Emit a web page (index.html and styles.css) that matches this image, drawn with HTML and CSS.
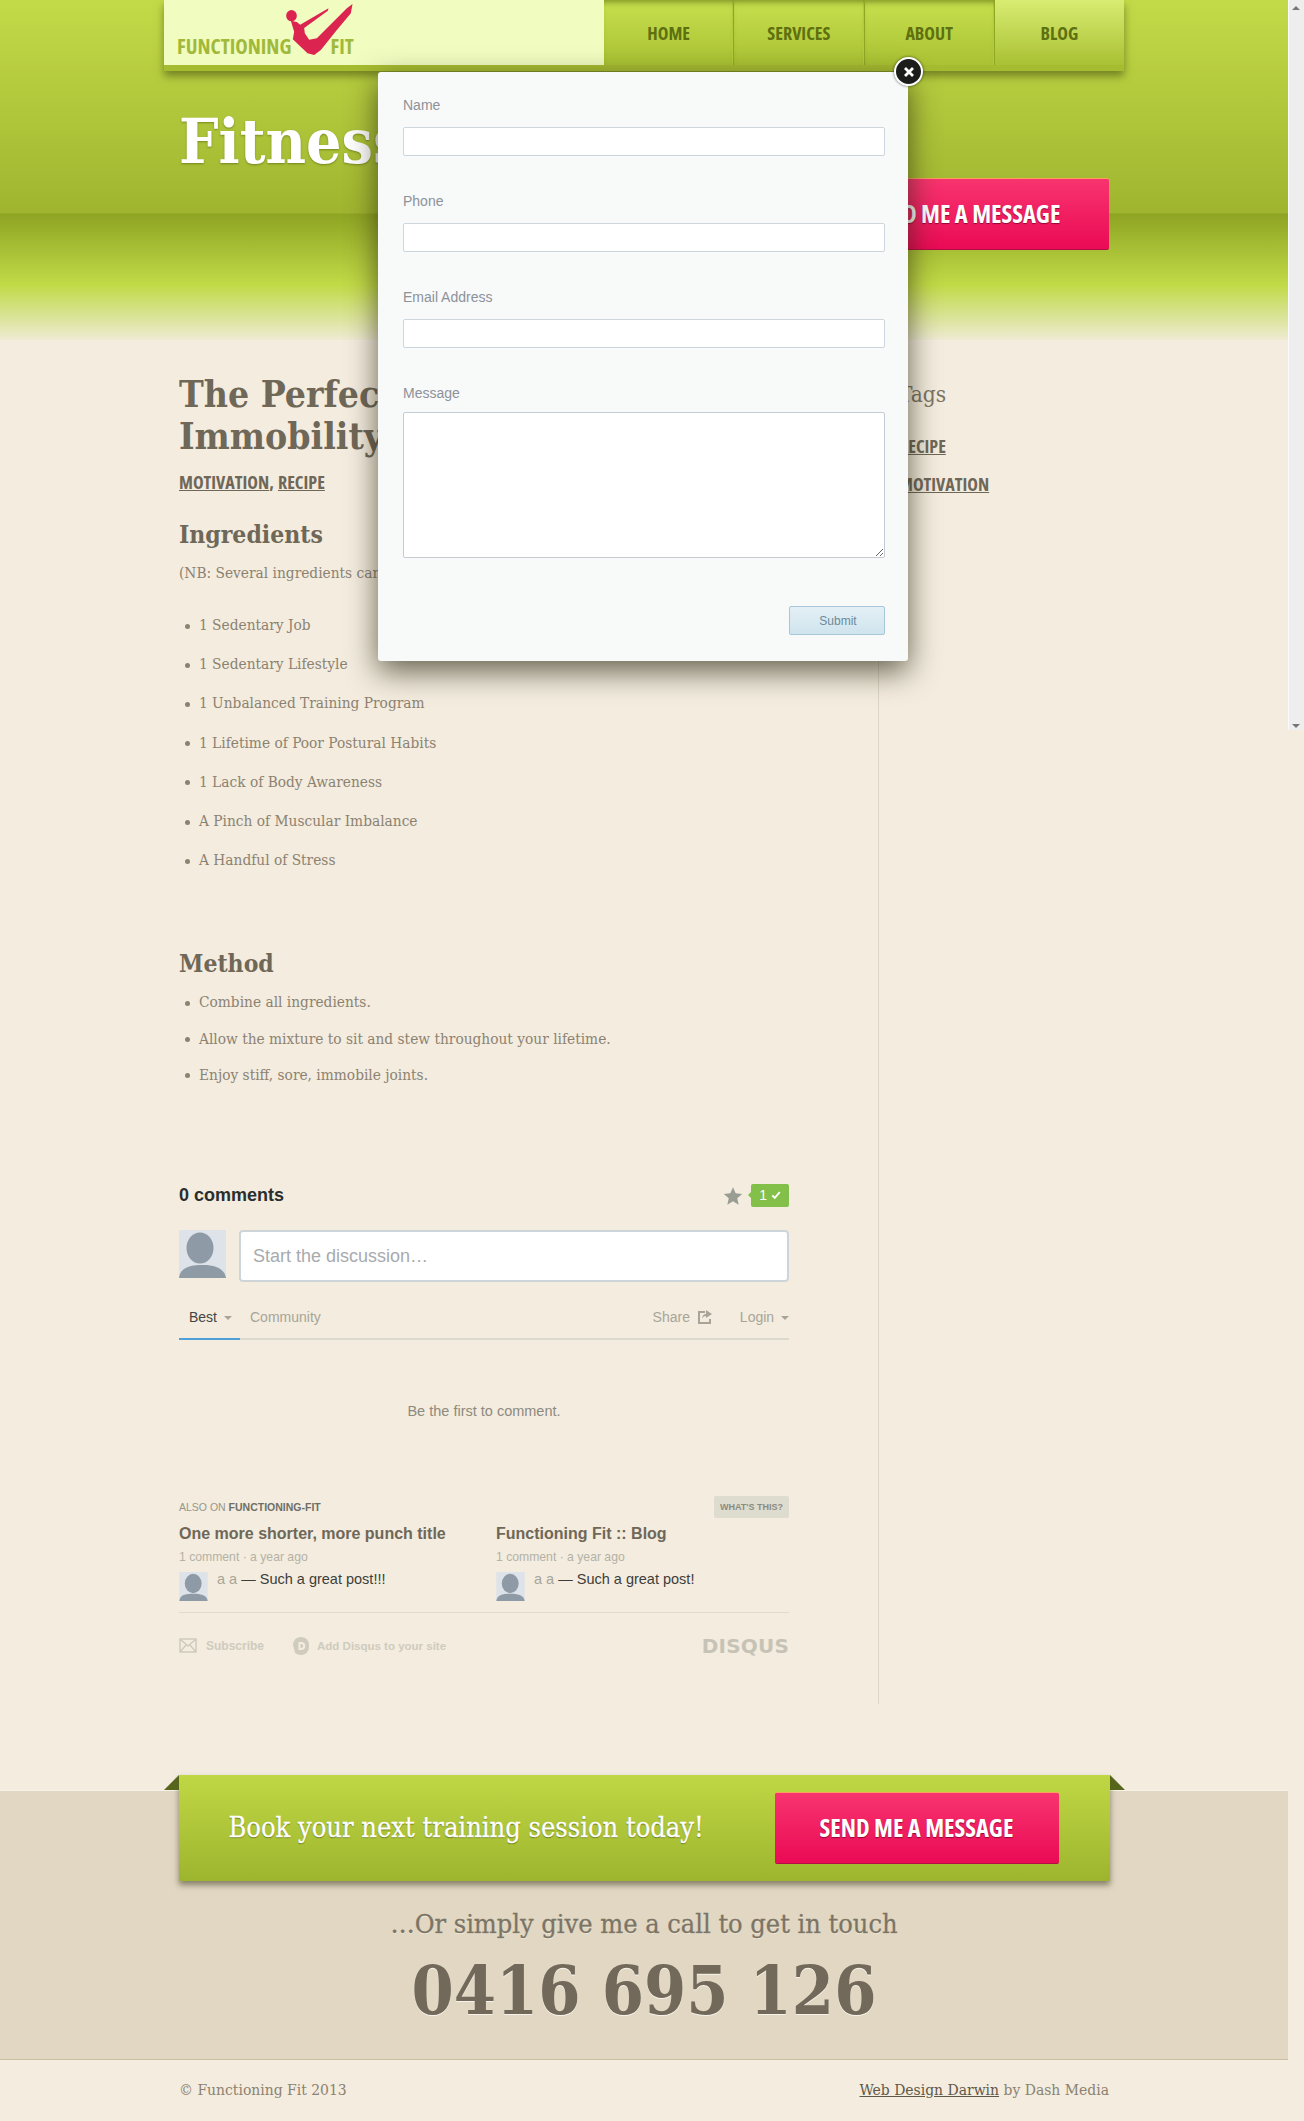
FILE: index.html
```html
<!DOCTYPE html>
<html>
  <head>
    <meta charset="utf-8">
    <title>The Perfect Recipe for Immobility - Functioning Fit</title>
    <link rel="stylesheet" href="styles.css">
  </head>
  <body>
    <div class="page">
      <header class="hero">
        <nav class="topbar">
          <a class="logo" href="#">
            <span class="logo-word">FUNCTIONING</span>
            <span class="logo-word fit">FIT</span>
            <svg class="logo-figure" viewBox="378 0 200 168" width="67" height="56">
              <ellipse cx="394" cy="47" rx="16" ry="17" fill="#dc2450"/>
              <path fill="#dc2450" d="M392 62 L410 66 L420 74 L505 25 L503 32 L432 84 L434 100 L447 119 L470 115 L530 55 L560 25 L577 12 L572 40 L530 90 L482 150 L462 165 L442 160 L398 118 L402 95 Z"/>
            </svg>
          </a>
          <ul class="menu">
            <li><a href="#">HOME</a></li>
            <li><a href="#">SERVICES</a></li>
            <li><a href="#">ABOUT</a></li>
            <li class="current"><a href="#">BLOG</a></li>
          </ul>
        </nav>
        <div class="hero-row">
          <h1>Fitness Blog</h1>
          <a class="pink-btn" href="#">SEND ME A MESSAGE</a>
        </div>
      </header>

      <div class="main">
        <article class="content">
          <h2>The Perfect Recipe for<br>Immobility</h2>
          <p class="post-tags"><a href="#">MOTIVATION</a>, <a href="#">RECIPE</a></p>

          <h3>Ingredients</h3>
          <p class="note">(NB: Several ingredients can be substituted)</p>
          <ul class="ingredients">
            <li>1 Sedentary Job</li>
            <li>1 Sedentary Lifestyle</li>
            <li>1 Unbalanced Training Program</li>
            <li>1 Lifetime of Poor Postural Habits</li>
            <li>1 Lack of Body Awareness</li>
            <li>A Pinch of Muscular Imbalance</li>
            <li>A Handful of Stress</li>
          </ul>

          <h3 class="method-title">Method</h3>
          <ul class="method">
            <li>Combine all ingredients.</li>
            <li>Allow the mixture to sit and stew throughout your lifetime.</li>
            <li>Enjoy stiff, sore, immobile joints.</li>
          </ul>

          <!-- comments -->
          <section class="disqus">
            <div class="dq-head">
              <strong>0 comments</strong>
              <div class="dq-rec">
                <svg viewBox="0 0 24 24" width="20" height="20"><path fill="#9a9d93" d="M12 1.500l3.200 7.200 7.800.8-5.900 5.200 1.700 7.700L12 18.400l-6.800 4 1.700-7.700L1 9.500l7.800-.8z"/></svg>
                <span class="dq-badge">1 <svg viewBox="0 0 12 12" width="10" height="10"><path fill="none" stroke="#fff" stroke-width="2.200" d="M1.500 6.500l3 3 6-7"/></svg></span>
              </div>
            </div>
            <div class="dq-compose">
              <svg class="avatar" viewBox="0 0 47 48" width="47" height="48">
                <rect width="47" height="48" fill="#dde3e8"/>
                <ellipse cx="21" cy="18" rx="13.500" ry="15.500" fill="#8e9aa6"/>
                <path fill="#8e9aa6" d="M0 48 C1 38 10 35 24 35 C38 35 46 40 47 48 Z"/>
              </svg>
              <div class="dq-input">Start the discussion…</div>
            </div>
            <div class="dq-tabs">
              <a class="active" href="#">Best <i class="caret"></i></a>
              <a href="#">Community</a>
              <span class="spacer"></span>
              <a class="share" href="#">Share
                <svg viewBox="0 0 14 14" width="14" height="14"><path fill="#a8a598" d="M0 1h7v2H2v9h9V9h2v5H0z"/><path fill="#a8a598" d="M8 0l6 4-6 4V6C6 6 4.500 7 4 9c0-3 1.500-5 4-5z"/></svg>
              </a>
              <a class="login" href="#">Login <i class="caret"></i></a>
            </div>
            <p class="dq-empty">Be the first to comment.</p>

            <div class="dq-also">
              <span>ALSO ON <b>FUNCTIONING-FIT</b></span>
              <a class="whats" href="#">WHAT'S THIS?</a>
            </div>
            <div class="dq-related">
              <div class="dq-item">
                <h4>One more shorter, more punch title</h4>
                <p class="dq-meta">1 comment · a year ago</p>
                <div class="dq-quote">
                  <svg class="avatar" viewBox="0 0 47 48" width="29" height="29">
                    <rect width="47" height="48" fill="#dde3e8"/>
                    <ellipse cx="23" cy="19" rx="14" ry="16" fill="#8e9aa6"/>
                    <path fill="#8e9aa6" d="M0 48 C1 38 10 36 24 36 C38 36 46 40 47 48 Z"/>
                  </svg>
                  <p><span>a a</span> — Such a great post!!!</p>
                </div>
              </div>
              <div class="dq-item">
                <h4>Functioning Fit :: Blog</h4>
                <p class="dq-meta">1 comment · a year ago</p>
                <div class="dq-quote">
                  <svg class="avatar" viewBox="0 0 47 48" width="29" height="29">
                    <rect width="47" height="48" fill="#dde3e8"/>
                    <ellipse cx="23" cy="19" rx="14" ry="16" fill="#8e9aa6"/>
                    <path fill="#8e9aa6" d="M0 48 C1 38 10 36 24 36 C38 36 46 40 47 48 Z"/>
                  </svg>
                  <p><span>a a</span> — Such a great post!</p>
                </div>
              </div>
            </div>
            <div class="dq-foot">
              <a href="#">
                <svg viewBox="0 0 18 15" width="18" height="15"><path fill="none" stroke="#cfcbbd" stroke-width="1.500" d="M1 1h16v13H1zM1 1l8 7 8-7M1 14l6-7M17 14l-6-7"/></svg>
                Subscribe
              </a>
              <a class="add" href="#">
                <svg viewBox="0 0 16 18" width="16" height="18"><path fill="#cfcbbd" d="M8 0a8 8 0 0 1 8 8v2a8 8 0 0 1-8 8c-3 0-5-1-6-2.500L0 8a8 8 0 0 1 8-8z"/><path fill="#f3ecdf" d="M5.500 5h2.700a4 4 0 0 1 0 8H5.500zM7.500 7v4h.7a2 2 0 0 0 0-4z"/></svg>
                Add Disqus to your site
              </a>
              <span class="spacer"></span>
              <span class="dq-logo">DISQUS</span>
            </div>
          </section>
        </article>

        <aside class="sidebar">
          <h3>Tags</h3>
          <ul>
            <li><a href="#">RECIPE</a></li>
            <li><a href="#">MOTIVATION</a></li>
          </ul>
        </aside>
      </div>

      <section class="contact">
        <div class="ribbon">
          <p>Book your next training session today!</p>
          <a class="pink-btn" href="#">SEND ME A MESSAGE</a>
        </div>
        <p class="call">…Or simply give me a call to get in touch</p>
        <p class="phone">0416 695 126</p>
      </section>

      <footer class="bottom">
        <span>© Functioning Fit 2013</span>
        <span><a href="#">Web Design Darwin</a> by Dash Media</span>
      </footer>
    </div>

    <!-- contact popup -->
    <div class="modal">
      <a class="modal-close" href="#">
        <svg viewBox="0 0 12 12" width="12" height="12"><path stroke="#fff" stroke-width="2.800" d="M2 2l8 8M10 2l-8 8"/></svg>
      </a>
      <form>
        <label>Name</label>
        <input type="text">
        <label>Phone</label>
        <input type="text">
        <label>Email Address</label>
        <input type="text">
        <label>Message</label>
        <textarea></textarea>
        <div class="modal-actions"><button type="button">Submit</button></div>
      </form>
    </div>

    <!-- the window's scrollbar, caught in the photo -->
    <div class="scrollbar"><i class="up"></i><i class="down"></i></div>
  </body>
</html>
```

FILE: styles.css
```css
html, body {
  margin: 0;
  padding: 0;
}
body {
  position: relative;
  height: 2121px;
  overflow: hidden;
  background: #f3ecdf;
  color: #8c8271;
  font-family: "DejaVu Serif", serif;
  font-stretch: condensed;
}
a {
  color: inherit;
}
ul {
  margin: 0;
  padding: 0;
  list-style: none;
}
.page {
  width: 1288px;
}

/* header */
.hero {
  height: 340px;
  background: linear-gradient(to bottom,
    #c3da48 0, #9fb52f 213px,
    #8ea423 214px, #c1da47 285px,
    #dbe49a 318px, #f3ecdf 345px);
}
.topbar {
  display: flex;
  width: 960px;
  height: 71px;
  margin: 0 auto;
  background: #a6bc30;
  box-shadow: 0 5px 8px rgba(60, 70, 10, .55);
}
.logo {
  position: relative;
  display: flex;
  align-items: flex-end;
  width: 427px;
  height: 65px;
  padding-left: 13px;
  background: #f1fcc0;
  text-decoration: none;
}
.logo-word {
  margin-bottom: 8px;
  color: #a1b93a;
  font: bold 21px/1 "Open Sans", sans-serif;
  font-stretch: 75%;
}
.logo-word.fit {
  margin-left: 39px;
}
.logo-figure {
  position: absolute;
  left: 122px;
  top: 0;
}
.menu {
  display: flex;
  flex: 1;
  height: 65px;
}
.menu li {
  flex: 1;
  background: linear-gradient(to bottom, #c7e04e, #aac233);
  border-right: 1px solid #8fa624;
  box-shadow: inset 0 6px 6px -4px rgba(90, 105, 15, .7), inset -1px 0 0 #b9d240;
}
.menu li.current {
  border-right: 0;
  background: linear-gradient(to bottom, #d8ec72, #a9c133);
  box-shadow: none;
}
.menu a {
  display: block;
  padding-top: 22px;
  color: #5e7010;
  font: bold 18px/22px "Open Sans", sans-serif;
  font-stretch: 75%;
  text-align: center;
  text-decoration: none;
}
.hero-row {
  display: flex;
  justify-content: space-between;
  width: 930px;
  margin: 0 auto;
}
.hero-row h1 {
  margin: 31px 0 0;
  color: #fff;
  font: bold 62px/80px "DejaVu Serif", serif;
  font-stretch: condensed;
  text-shadow: 0 1px 2px rgba(70, 80, 10, .5);
}
.hero-row .pink-btn {
  margin-top: 107px;
  padding-right: 7px;
}
.pink-btn {
  display: block;
  box-sizing: border-box;
  width: 284px;
  height: 72px;
  border-top: 1px solid #f9a25e;
  border-bottom: 1px solid #b30d45;
  border-radius: 2px;
  background: linear-gradient(to bottom, #f8346f, #ea0a55);
  color: #fff;
  font: bold 24.500px/69px "Open Sans", sans-serif;
  font-stretch: 75%;
  text-align: center;
  text-decoration: none;
  text-shadow: 0 1px 1px #8c0a35;
}

/* post */
.main {
  display: flex;
  width: 930px;
  height: 1364px;
  margin: 0 auto;
}
.content {
  box-sizing: border-box;
  width: 700px;
  border-right: 1px solid #dcd5c5;
}
.content h2 {
  margin: 33px 0 0;
  color: #6f6757;
  font: bold 37px/42px "DejaVu Serif", serif;
  font-stretch: condensed;
}
.post-tags {
  margin: 13px 0 0;
  color: #6f6757;
  font: bold 18px/24px "Open Sans", sans-serif;
  font-stretch: 75%;
}
.post-tags a + a {
  margin-left: 1px;
}
.content h3 {
  margin: 23px 0 0;
  color: #6f6757;
  font: bold 24.500px/36px "DejaVu Serif", serif;
  font-stretch: condensed;
}
.note {
  margin: 8px 0 0;
  font-size: 15.300px;
  line-height: 24px;
}
.ingredients {
  margin-top: 21px;
}
.ingredients li, .method li {
  position: relative;
  padding-left: 20px;
  font-size: 15.300px;
}
.ingredients li {
  line-height: 39.200px;
}
.method li {
  line-height: 36.400px;
}
.ingredients li:before, .method li:before {
  content: "";
  position: absolute;
  left: 6px;
  top: 50%;
  width: 5px;
  height: 5px;
  margin-top: -2px;
  border-radius: 50%;
  background: #8c8271;
}
.content .method-title {
  margin-top: 66px;
}
.method {
  margin-top: 2px;
}

/* comments */
.disqus {
  width: 610px;
  margin-top: 90px;
  font-family: "Liberation Sans", sans-serif;
  font-stretch: normal;
}
.dq-head {
  display: flex;
  justify-content: space-between;
  align-items: center;
  height: 24px;
  color: #2a2e2e;
  font-size: 18px;
}
.dq-rec {
  display: flex;
  align-items: center;
  gap: 8px;
}
.dq-badge {
  position: relative;
  display: block;
  width: 38px;
  height: 23px;
  border-radius: 2px;
  background: #83c04a;
  color: #fff;
  font-size: 14px;
  line-height: 23px;
  text-align: center;
}
.dq-badge:before {
  content: "";
  position: absolute;
  left: -3px;
  top: 8px;
  border-top: 3px solid transparent;
  border-bottom: 3px solid transparent;
  border-right: 3px solid #83c04a;
}
.dq-compose {
  display: flex;
  gap: 13px;
  margin-top: 22px;
}
.avatar {
  display: block;
  flex: none;
}
.dq-input {
  flex: 1;
  box-sizing: border-box;
  height: 52px;
  padding-left: 12px;
  border: 2px solid #cdd5d9;
  border-radius: 4px;
  background: #fff;
  color: #a7abad;
  font-size: 18px;
  line-height: 48px;
}
.dq-tabs {
  display: flex;
  height: 43px;
  margin-top: 13px;
  border-bottom: 2px solid #dcd9cd;
  color: #a8a598;
  font-size: 14px;
  line-height: 44px;
}
.dq-tabs a {
  margin-bottom: -2px;
  text-decoration: none;
}
.dq-tabs a.active {
  box-sizing: border-box;
  width: 61px;
  padding-left: 10px;
  border-bottom: 2px solid #4f9fd8;
  color: #444;
}
.dq-tabs a:nth-child(2) {
  margin-left: 10px;
}
.dq-tabs .share svg {
  vertical-align: -2px;
  margin-left: 4px;
}
.dq-tabs .login {
  margin-left: 28px;
}
.spacer {
  flex: 1;
}
.caret {
  display: inline-block;
  margin-left: 3px;
  border-top: 4px solid #a8a598;
  border-left: 4px solid transparent;
  border-right: 4px solid transparent;
  vertical-align: 2px;
}
.dq-empty {
  margin: 61px 0 0;
  color: #8d8a7e;
  font-size: 14.500px;
  line-height: 20px;
  text-align: center;
}
.dq-also {
  display: flex;
  justify-content: space-between;
  align-items: center;
  height: 22px;
  margin-top: 75px;
  color: #96968c;
  font-size: 10.500px;
}
.dq-also b {
  color: #6f6f66;
}
.whats {
  display: block;
  width: 75px;
  border-radius: 2px;
  background: #dedbcf;
  color: #8c8c80;
  font-size: 9px;
  font-weight: bold;
  line-height: 22px;
  text-align: center;
  text-decoration: none;
}
.dq-related {
  display: flex;
  height: 94px;
  border-bottom: 1px solid #e0dbcd;
}
.dq-item {
  flex: none;
  width: 317px;
}
.dq-item + .dq-item {
  flex: 1;
  width: auto;
}
.dq-item h4 {
  margin: 5px 0 0;
  color: #6f6757;
  font-size: 16px;
  line-height: 22px;
}
.dq-meta {
  margin: 3px 0 0;
  color: #b4b2a6;
  font-size: 12.200px;
  line-height: 18px;
}
.dq-quote {
  display: flex;
  gap: 9px;
  margin-top: 6px;
}
.dq-quote p {
  margin: -2px 0 0;
  color: #3d3d3a;
  font-size: 14.500px;
  line-height: 18px;
}
.dq-quote span {
  color: #a8a598;
}
.dq-foot {
  display: flex;
  align-items: center;
  height: 30px;
  margin-top: 18px;
  color: #cfcbbd;
  font-size: 12px;
  font-weight: bold;
}
.dq-foot a {
  display: flex;
  align-items: center;
  gap: 9px;
  text-decoration: none;
}
.dq-foot .add {
  gap: 8px;
  margin-left: 29px;
  font-size: 11.500px;
}
.dq-logo {
  color: #c6c3b6;
  font: bold 20px/1 "DejaVu Sans", sans-serif;
  letter-spacing: .2px;
}

/* sidebar */
.sidebar {
  padding: 36px 0 0 20px;
}
.sidebar h3 {
  margin: 0;
  color: #7c7464;
  font: normal 22.500px/36px "DejaVu Serif", serif;
  font-stretch: condensed;
}
.sidebar ul {
  margin-top: 15px;
}
.sidebar li {
  color: #6f6757;
  font: bold 18px/38px "Open Sans", sans-serif;
  font-stretch: 75%;
}

/* call to action */
.contact {
  height: 268px;
  margin-top: 86px;
  border-top: 1px solid #f7f3ea;
  border-bottom: 1px solid #c9bfa3;
  background: #e1d7c2;
  text-align: center;
}
.ribbon {
  position: relative;
  display: flex;
  justify-content: space-between;
  box-sizing: border-box;
  width: 931px;
  height: 106px;
  margin: -16px auto 0;
  padding: 17px 51px 0 50px;
  background: linear-gradient(to bottom, #c0d744, #9db52e);
  box-shadow: 0 4px 6px rgba(60, 55, 30, .55);
}
.ribbon:before, .ribbon:after {
  content: "";
  position: absolute;
  top: 0;
  border-bottom: 15px solid #56651a;
}
.ribbon:before {
  left: -15px;
  border-left: 15px solid transparent;
}
.ribbon:after {
  right: -15px;
  border-right: 15px solid transparent;
}
.ribbon p {
  margin: 0;
  color: #fff;
  font: normal 27px/72px "DejaVu Serif", serif;
  font-stretch: condensed;
  text-shadow: 0 1px 1px rgba(70, 80, 10, .7);
  -webkit-text-stroke: .3px #fff;
}
.call {
  margin: 23px 0 0;
  color: #7c7464;
  font: normal 26.900px/40px "DejaVu Serif", serif;
  font-stretch: condensed;
  text-shadow: 0 1px 0 #f3ecdf;
  -webkit-text-stroke: .3px #7c7464;
}
.phone {
  margin: 3px 0 0;
  color: #72695a;
  font: bold 67.500px/88px "DejaVu Serif", serif;
  font-stretch: condensed;
  text-shadow: 0 1px 0 #f7f3ea;
}

/* footer */
.bottom {
  display: flex;
  justify-content: space-between;
  width: 930px;
  margin: 0 auto;
  padding-top: 19px;
  font-size: 15.500px;
  line-height: 22px;
}
.bottom a {
  color: #5f5849;
}

/* popup */
.modal {
  position: absolute;
  left: 378px;
  top: 72px;
  box-sizing: border-box;
  width: 530px;
  height: 589px;
  padding: 25px 23px 0 25px;
  border-radius: 3px;
  background: #f8f9f9;
  box-shadow: 0 10px 30px rgba(40, 35, 15, .7);
  font-family: "Liberation Sans", sans-serif;
  font-stretch: normal;
}
.modal label {
  display: block;
  color: #8d9299;
  font-size: 14px;
  line-height: 16px;
}
.modal input, .modal textarea {
  display: block;
  box-sizing: border-box;
  width: 482px;
  height: 29px;
  margin: 14px 0 37px;
  border: 1px solid #cdd6dc;
  border-radius: 2px;
  background: #fff;
  outline: 0;
}
.modal textarea {
  height: 146px;
  margin: 11px 0 0;
  border-color: #c3ccd2;
}
.modal-actions {
  display: flex;
  justify-content: flex-end;
  margin-top: 48px;
}
.modal button {
  width: 96px;
  height: 29px;
  padding: 0 0 0 2px;
  border: 1px solid #a6c7d8;
  border-radius: 2px;
  background: linear-gradient(to bottom, #e4f0f5, #cfe4ee);
  color: #6c8a9c;
  font: 12px "Liberation Sans", sans-serif;
}
.modal-close {
  position: absolute;
  right: -15px;
  top: -15px;
  display: flex;
  align-items: center;
  justify-content: center;
  box-sizing: border-box;
  width: 29px;
  height: 29px;
  border: 2px solid #fff;
  border-radius: 50%;
  background: #1b1d1b;
  box-shadow: 0 0 3px rgba(0, 0, 0, .6);
}

/* scrollbar */
.scrollbar {
  position: absolute;
  left: 1288px;
  top: 0;
  width: 16px;
  height: 730px;
  background: #eeeeee;
  box-shadow: inset 1px 0 0 #fafafa;
}
.scrollbar i {
  position: absolute;
  left: 4px;
  border-left: 4px solid transparent;
  border-right: 4px solid transparent;
}
.scrollbar .up {
  top: 6px;
  border-bottom: 4px solid #777;
}
.scrollbar .down {
  bottom: 2px;
  border-top: 4px solid #777;
}
```
